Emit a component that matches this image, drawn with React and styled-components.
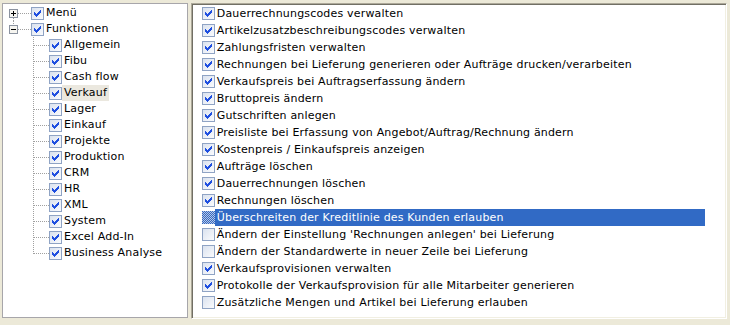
import React, { useId } from "react";
import styled, { createGlobalStyle } from "styled-components";

// Grundstile: XP-Hintergrund, Verdana-artige Schrift
const GlobalStyle = createGlobalStyle`
  html, body {
    margin: 0;
    padding: 0;
    background: #ece9d8;
  }
  body {
    font-family: "DejaVu Sans", Verdana, sans-serif;
    font-size: 11px;
    letter-spacing: 0.18px;
    color: #000;
  }
`;

const Window = styled.div`
  display: flex;
  gap: 3px;
  padding: 3px 3px 0 2px;
  width: 730px;
  height: 325px;
  box-sizing: border-box;
`;

// Linke Baumansicht
const TreePanel = styled.div`
  width: 186px;
  height: 315px;
  box-sizing: border-box;
  background: #fff;
  border: 1px solid #a7a6aa;
  padding-top: 1px;
`;

const TreeRow = styled.div`
  display: flex;
  align-items: center;
  height: 16px;
`;

// Zelle mit den gepunkteten Verbindungslinien des Baums
const Gutter = styled.div`
  position: relative;
  flex: none;
  align-self: stretch;
  width: ${(p) => p.$width}px;

  &::before {
    content: "";
    display: ${(p) => (p.$vHeight ? "block" : "none")};
    position: absolute;
    left: ${(p) => p.$lineX}px;
    top: ${(p) => p.$vTop || 0}px;
    width: 1px;
    height: ${(p) => p.$vHeight || 0}px;
    background: repeating-linear-gradient(to bottom, #a0a0a0 0 1px, transparent 1px 2px);
  }

  &::after {
    content: "";
    position: absolute;
    left: ${(p) => p.$hFrom}px;
    right: 0;
    top: 8px;
    height: 1px;
    background: repeating-linear-gradient(to right, #a0a0a0 0 1px, transparent 1px 2px);
  }
`;

const ExpanderBox = styled.svg`
  position: absolute;
  left: 6px;
  top: 4px;
  display: block;
`;

const TreeLabel = styled.span`
  padding: 0 2px;
  height: 16px;
  line-height: 16px;
  white-space: nowrap;
  background: ${(p) => (p.$selected ? "#ebe8df" : "transparent")};
`;

// Rechte Liste mit Berechtigungen
const ListPanel = styled.div`
  width: 537px;
  height: 316px;
  box-sizing: border-box;
  background: #fff;
  border: 1px solid;
  border-color: #aca899 #fff #fff #aca899;
  box-shadow: inset 1px 1px #716f64, inset -1px -1px #f1efe2;
  padding: 1px 0 0 10px;
`;

const ListRow = styled.div`
  display: flex;
  align-items: center;
  height: 17px;
`;

const ListLabel = styled.span`
  width: 490px;
  height: 17px;
  line-height: 17px;
  padding-left: 2px;
  white-space: nowrap;
  box-sizing: border-box;
  background: ${(p) => (p.$selected ? "#316ac5" : "transparent")};
  color: ${(p) => (p.$selected ? "#fff" : "#000")};
`;

const CheckSvg = styled.svg`
  display: block;
  flex: none;
`;

const CHECK_PIXELS = [
  [9, 3, 1], [8, 4, 2], [3, 5, 1], [7, 5, 3], [3, 6, 2], [6, 6, 3],
  [3, 7, 5], [4, 8, 3], [5, 9, 1],
];
const checkPath = CHECK_PIXELS.map(([x, y, w]) => `M${x} ${y}h${w}v1h-${w}z`).join("");

const CheckBox = ({ checked, dithered }) => {
  const id = useId().replace(/:/g, "");
  return (
    <CheckSvg width="13" height="13" viewBox="0 0 13 13" shapeRendering="crispEdges">
      <defs>
        <linearGradient id={`g${id}`} x1="0" y1="0" x2="1" y2="1">
          <stop offset="0" stopColor="#d9e1ee" />
          <stop offset="1" stopColor="#fbfcfe" />
        </linearGradient>
        <pattern id={`d${id}`} width="2" height="2" patternUnits="userSpaceOnUse">
          <rect width="2" height="2" fill="#b9c6e3" />
          <rect width="1" height="1" fill="#316ac5" />
          <rect x="1" y="1" width="1" height="1" fill="#316ac5" />
        </pattern>
      </defs>
      {dithered ? (
        <rect width="13" height="13" fill={`url(#d${id})`} />
      ) : (
        <>
          <rect x="0.5" y="0.5" width="12" height="12" fill={`url(#g${id})`} stroke="#8fa3c4" />
          {checked && <path d={checkPath} fill="#1f4fe0" />}
        </>
      )}
    </CheckSvg>
  );
};

const Expander = ({ open }) => (
  <ExpanderBox width="9" height="9" viewBox="0 0 9 9" shapeRendering="crispEdges">
    <rect x="0.5" y="0.5" width="8" height="8" fill="#f6f5f0" stroke="#8b93a0" />
    <rect x="2" y="4" width="5" height="1" fill="#000" />
    {!open && <rect x="4" y="2" width="1" height="5" fill="#000" />}
  </ExpanderBox>
);

const children = [
  "Allgemein", "Fibu", "Cash flow", "Verkauf", "Lager", "Einkauf", "Projekte",
  "Produktion", "CRM", "HR", "XML", "System", "Excel Add-In", "Business Analyse",
];

const rights = [
  ["Dauerrechnungscodes verwalten", true],
  ["Artikelzusatzbeschreibungscodes verwalten", true],
  ["Zahlungsfristen verwalten", true],
  ["Rechnungen bei Lieferung generieren oder Aufträge drucken/verarbeiten", true],
  ["Verkaufspreis bei Auftragserfassung ändern", true],
  ["Bruttopreis ändern", true],
  ["Gutschriften anlegen", true],
  ["Preisliste bei Erfassung von Angebot/Auftrag/Rechnung ändern", true],
  ["Kostenpreis / Einkaufspreis anzeigen", true],
  ["Aufträge löschen", true],
  ["Dauerrechnungen löschen", true],
  ["Rechnungen löschen", true],
  ["Überschreiten der Kreditlinie des Kunden erlauben", false, true],
  ["Ändern der Einstellung 'Rechnungen anlegen' bei Lieferung", false],
  ["Ändern der Standardwerte in neuer Zeile bei Lieferung", false],
  ["Verkaufsprovisionen verwalten", true],
  ["Protokolle der Verkaufsprovision für alle Mitarbeiter generieren", true],
  ["Zusätzliche Mengen und Artikel bei Lieferung erlauben", false],
];

const App = () => (
  <>
    <GlobalStyle />
    <Window>
      <TreePanel>
        <TreeRow>
          <Gutter $width={28} $lineX={10} $vTop={13} $vHeight={3} $hFrom={15}>
            <Expander open={false} />
          </Gutter>
          <CheckBox checked />
          <TreeLabel>Menü</TreeLabel>
        </TreeRow>
        <TreeRow>
          <Gutter $width={28} $lineX={10} $vTop={0} $vHeight={4} $hFrom={15}>
            <Expander open />
          </Gutter>
          <CheckBox checked />
          <TreeLabel>Funktionen</TreeLabel>
        </TreeRow>
        {children.map((name, i) => (
          <TreeRow key={name}>
            <Gutter
              $width={46}
              $lineX={30}
              $vHeight={i === children.length - 1 ? 9 : 16}
              $hFrom={31}
            />
            <CheckBox checked />
            <TreeLabel $selected={name === "Verkauf"}>{name}</TreeLabel>
          </TreeRow>
        ))}
      </TreePanel>

      <ListPanel>
        {rights.map(([text, checked, selected]) => (
          <ListRow key={text}>
            <CheckBox checked={checked} dithered={selected} />
            <ListLabel $selected={selected}>{text}</ListLabel>
          </ListRow>
        ))}
      </ListPanel>
    </Window>
  </>
);

export default App;
